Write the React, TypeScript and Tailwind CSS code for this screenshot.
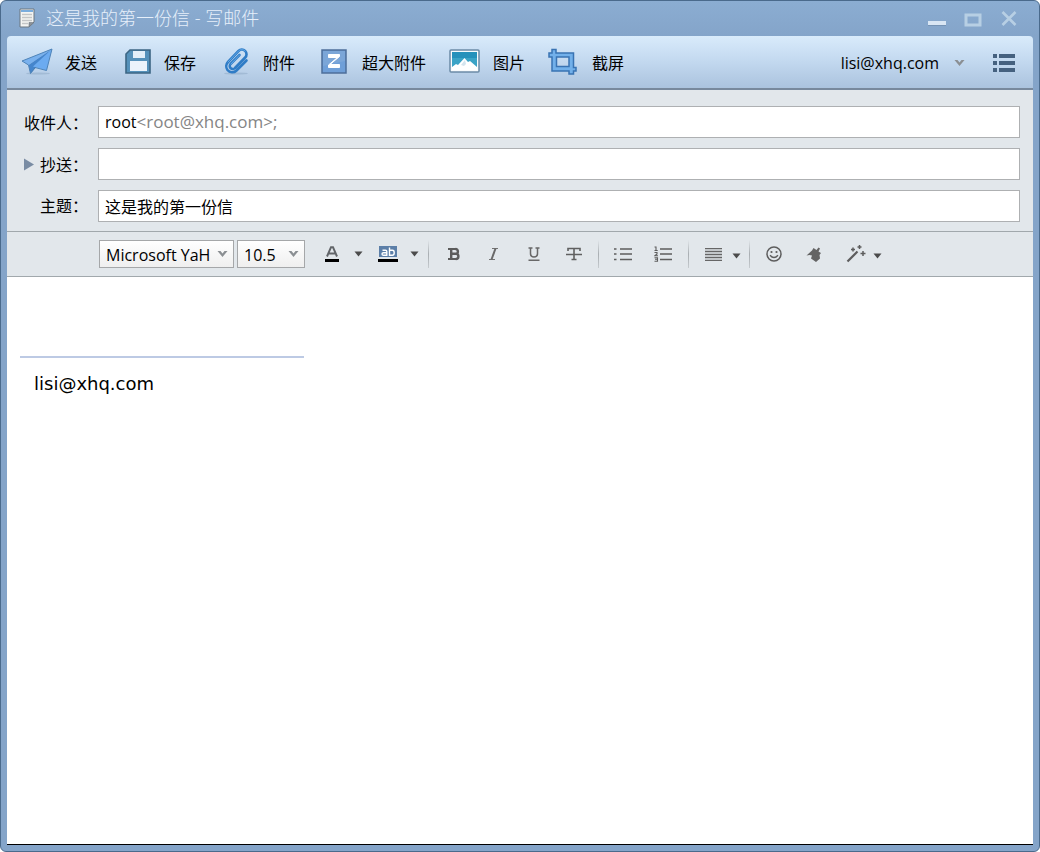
import React, { useState } from "react";

interface IconProps {
  className?: string;
}

const NoteIcon: React.FC<IconProps> = ({ className }) => (
  <svg width="18" height="20" viewBox="0 0 18 20" className={className}>
    <path d="M2 1h14v13l-5 5H2z" fill="#f4f4f2" stroke="#6b7680" strokeWidth="1" />
    <path d="M3 3h12" stroke="#5c9bd8" strokeWidth="1.6" />
    <path d="M4 6.5h10M4 9.5h10M4 12.5h10M4 15.5h6" stroke="#c3c5c6" strokeWidth="1.3" />
    <path d="M11 19v-4.5h5z" fill="#8c9298" stroke="#6b7680" strokeWidth="0.6" />
  </svg>
);

const SendIcon: React.FC = () => (
  <svg width="32" height="28" viewBox="0 2 32 28" className="overflow-visible">
    <ellipse cx="16" cy="26.5" rx="12" ry="1" fill="#93adc9" opacity="0.6" />
    <path d="M30 2 0 14 6.500 18z" fill="#79b1ee" />
    <path d="M30 2 6.500 18l2 8.500z" fill="#4585cc" />
    <path d="M30 2 8.500 26.500l4.500-6z" fill="#2b619f" />
    <path d="M30 2 11 19.500l13.500 4z" fill="#6cabf0" />
    <path
      d="M30 2 0 14 6.500 18l2 8.500 4.500-6 11.500 3z"
      fill="none"
      stroke="#4d83b8"
      strokeWidth="1"
      strokeLinejoin="round"
    />
  </svg>
);

const SaveIcon: React.FC = () => (
  <svg width="32" height="28" viewBox="0 2 32 28" className="overflow-visible">
    <path d="M9 3h20v23H5V7z" fill="#5591ba" stroke="#3c6684" strokeWidth="1.6" />
    <path d="M12 4h12v7H12z" fill="#e3eff9" />
    <path d="M9 14h17v10H9z" fill="#ebf3fb" />
  </svg>
);

const ClipIcon: React.FC = () => (
  <svg width="32" height="28" viewBox="1 2 32 28" className="overflow-visible">
    <ellipse cx="17" cy="26.500" rx="12" ry="1" fill="#93adc9" opacity="0.6" />
    <g fill="none" stroke="#2f7cc6" strokeWidth="2.600" strokeLinecap="round">
      <path d="M27.500 13.500 17.500 23.500a6 6 0 0 1-9-.5 6.200 6.200 0 0 1 .5-8L19.500 4a4.600 4.600 0 0 1 6.700 6.500L16 21a2.800 2.800 0 0 1-4.500-4L20.500 8" />
    </g>
    <g fill="none" stroke="#6fb2ee" strokeWidth="0.8" strokeLinecap="round">
      <path d="M9 15 19.500 4a4.600 4.600 0 0 1 6.700 0M12 17 20.500 8" />
    </g>
  </svg>
);

const BigFileIcon: React.FC = () => (
  <svg width="32" height="28" viewBox="0 2 32 28" className="overflow-visible">
    <path d="M3 3h24v23H3z" fill="#6f9fd8" stroke="#4d6f9a" strokeWidth="1.500" />
    <path d="M4 4h22v10L4 19z" fill="#84abd9" opacity="0.6" />
    <path d="M9.500 7.500h11v2l-9.500 8h9.500v3H9.500v-2.500l9-7.500H9.500z" fill="#fff" stroke="#fff" />
  </svg>
);

const PictureIcon: React.FC = () => (
  <svg width="32" height="28" viewBox="1 2 32 28" className="overflow-visible">
    <rect x="1" y="3" width="29" height="22" rx="1" fill="#f8fbfd" stroke="#6b8ba6" strokeWidth="1.500" />
    <path d="M3 5h25v18H3z" fill="#3ba3c6" />
    <path d="M3 5h25v6H3z" fill="#2691bb" />
    <path d="M3 20l4-3 2 1 6.500-7 3.500 4 2-1 7 6v3H3z" fill="#fff" />
    <path d="m12 18 4-5 1 4-2 2z" fill="#d3e4ee" />
  </svg>
);

const CropIcon: React.FC = () => (
  <svg width="32" height="28" viewBox="1 2 32 28" className="overflow-visible">
    <path
      d="M4 2.500h4V6h17.500v14.500H28V24h-2.500v3H21v-3H4V10H1V6h3zM8.500 10v9.500h12.500V10z"
      fill="#72b0ea"
      fillRule="evenodd"
      stroke="#3973b3"
      strokeWidth="1.500"
    />
  </svg>
);

const Caret: React.FC = () => (
  <svg width="9" height="6" viewBox="0 0 9 6">
    <path d="M0.500 0.500h8L4.500 5.500z" fill="#4b4b4b" />
  </svg>
);

const Chevron: React.FC<IconProps> = ({ className }) => (
  <svg width="11" height="8" viewBox="0 0 11 8" className={className}>
    <path d="M0.500 1h3l2 2.500 2-2.500h3l-5 6z" fill="#8b8f93" />
  </svg>
);

const TextColorIcon: React.FC = () => (
  <svg width="14" height="16" viewBox="0 0 14 16">
    <path d="M2 10.500 6 1.200h2l4 9.300M3.800 7.500h6.400" fill="none" stroke="#626569" strokeWidth="2" />
    <path d="M0 13h14v3H0z" fill="#000" />
  </svg>
);

const HighlightIcon: React.FC = () => (
  <svg width="20" height="16" viewBox="0 0 20 16">
    <path d="M1 0h18v11H1z" fill="#5c7fa8" />
    <g fill="none" stroke="#fff" strokeWidth="1.400">
      <path d="M4.500 4.200h3q1.300 0 1.300 1.300v3.800H5.500q-1.500 0-1.500-1.300t1.500-1.300h3.300" />
      <path d="M11.500 1.500v7.800h3q1.700 0 1.700-2.500t-1.700-2.500h-3" />
    </g>
    <path d="M0 13h20v3H0z" fill="#000" />
  </svg>
);

const BoldIcon: React.FC = () => (
  <svg width="12" height="14" viewBox="0 0 12 14">
    <path d="M0 2h8M0 12h8" stroke="#5c5c5c" strokeWidth="1.800" />
    <path
      d="M3.200 2v10M3.200 6.800h5M7.500 2a2.300 2.300 0 0 1 0 4.800M7.800 6.800a2.600 2.600 0 0 1 0 5.200"
      fill="none"
      stroke="#5c5c5c"
      strokeWidth="2.400"
    />
  </svg>
);

const ItalicIcon: React.FC = () => (
  <svg width="14" height="14" viewBox="0 0 14 14">
    <path d="M5 1.500h6M2 12.500h6" stroke="#737373" strokeWidth="1.200" />
    <path d="m8.500 1.500-4 11" stroke="#686868" strokeWidth="2" />
  </svg>
);

const UnderlineIcon: React.FC = () => (
  <svg width="12" height="14" viewBox="0 0 12 14">
    <path
      d="M0.500 1h4M7.500 1h4M2.500 1v5.500q0 3.500 3.500 3.500t3.500-3.500V1M0.500 13.200h11"
      fill="none"
      stroke="#686868"
      strokeWidth="1.500"
    />
  </svg>
);

const StrikeIcon: React.FC = () => (
  <svg width="18" height="14" viewBox="0 0 18 14">
    <path d="M3 4V1.500h12V4M9 1.500V13M6.500 12.500h5M1 7.500h16" fill="none" stroke="#606060" strokeWidth="1.600" />
  </svg>
);

const BulletListIcon: React.FC = () => (
  <svg width="18" height="14" viewBox="0 0 18 14">
    <path d="M0 2h2.500M0 7h2.500M0 12.500h2.500M6 2h12M6 7h12M6 12.500h12" stroke="#5d5d5d" strokeWidth="1.700" />
  </svg>
);

const NumberListIcon: React.FC = () => (
  <svg width="18" height="16" viewBox="0 0 18 16">
    <path d="M6 3h12M6 8h12M6 13.500h12" stroke="#5d5d5d" strokeWidth="1.700" />
    <path
      d="M0.500 1h1.500v3.500M0.500 4.500h3.200M0.500 6.500h2.500v1.500l-2 1.700h3M0.500 11.700h3v3.500h-3M1 13.300h2"
      fill="none"
      stroke="#5d5d5d"
      strokeWidth="1.100"
    />
  </svg>
);

const AlignIcon: React.FC = () => (
  <svg width="17" height="13" viewBox="0 0 17 13">
    <path d="M0 0.500h17M0 3.500h17M0 6.500h17M0 9.500h17M0 12.500h17" stroke="#666" strokeWidth="1.600" />
  </svg>
);

const SmileIcon: React.FC = () => (
  <svg width="16" height="16" viewBox="0 0 16 16">
    <circle cx="8" cy="8" r="7" fill="none" stroke="#5d5d5d" strokeWidth="1.500" />
    <circle cx="5.500" cy="6" r="1.100" fill="#5d5d5d" />
    <circle cx="10.500" cy="6" r="1.100" fill="#5d5d5d" />
    <path d="M4 9.200q4 4.600 8 0" fill="none" stroke="#5d5d5d" strokeWidth="1.300" />
  </svg>
);

const BucketIcon: React.FC = () => (
  <svg width="16" height="16" viewBox="0 0 16 16">
    <path d="M0.500 9.500 6 4.500l1.500-2.500 3 2 2-2.500 1.500 1-1.500 3 2.500 1.500-1.500 2 .5 3.500-4 3.500-5-3.500 1-3-2.500-.5z" fill="#646464" />
  </svg>
);

const WandIcon: React.FC = () => (
  <svg width="20" height="18" viewBox="0 0 20 18">
    <path d="M1.500 16.500 11.500 6.500" stroke="#5d5d5d" strokeWidth="2.200" />
    <path
      d="M7 2.500v4M5 4.500h4M13.500 0v4M11.500 2h4M17 6v5M14.500 8.500h5"
      stroke="#5d5d5d"
      strokeWidth="1.500"
    />
  </svg>
);

const actions = [
  { label: "发送", icon: <SendIcon /> },
  { label: "保存", icon: <SaveIcon /> },
  { label: "附件", icon: <ClipIcon /> },
  { label: "超大附件", icon: <BigFileIcon /> },
  { label: "图片", icon: <PictureIcon /> },
  { label: "截屏", icon: <CropIcon /> },
];

interface ToolProps {
  label: string;
  className: string;
  children: React.ReactNode;
}

const Tool: React.FC<ToolProps> = ({ label, className, children }) => (
  <button
    type="button"
    aria-label={label}
    title={label}
    className={`flex h-7 shrink-0 items-center justify-center ${className}`}
  >
    {children}
  </button>
);

const Separator: React.FC<IconProps> = ({ className }) => (
  <div className={`h-7 w-px shrink-0 bg-linear-to-b from-[#e2e7eb] via-[#a9aeb2] to-[#c6cbcf] ${className}`} />
);

const fieldClass =
  "h-8 min-w-0 flex-1 border border-[#aeb0b2] bg-white px-1.5 text-base text-black focus:outline-none";

const selectClass =
  "block h-7 w-full appearance-none overflow-hidden border border-[#a5a7a9] bg-linear-to-b from-white to-[#efefef] pt-0.5 pr-[23px] pl-1.5";

const App: React.FC = () => {
  const [recipient, setRecipient] = useState("");
  const [cc, setCc] = useState("");
  const [subject, setSubject] = useState("这是我的第一份信");
  const [font, setFont] = useState("Microsoft YaHei");
  const [size, setSize] = useState("10.5");

  return (
    <div className="flex min-h-screen flex-col rounded-md border border-[#4a6a8c] bg-linear-to-b from-[#8badd2] to-[#84a4c9] to-[36px] px-1.5 pb-1.5 font-['Open_Sans','Noto_Sans_CJK_SC',sans-serif] text-base text-black">
      <header className="flex h-[35px] items-center pr-3 pb-0.5 pl-[11px]">
        <NoteIcon />
        <h1 className="ml-2.5 flex-1 text-lg leading-6 font-light text-[#e6effa]">这是我的第一份信 - 写邮件</h1>
        <div className="flex items-center gap-3">
          <button type="button" aria-label="最小化" className="flex h-6 w-6 items-center justify-center">
            <svg width="18" height="18" viewBox="0 0 18 18">
              <path d="M0 12h18v4H0z" fill="#d9e6f4" />
              <path d="M0 16h18v1H0z" fill="#7593b5" />
            </svg>
          </button>
          <button type="button" aria-label="最大化" className="flex h-6 w-6 items-center justify-center">
            <svg width="18" height="18" viewBox="0 0 18 18">
              <path d="M2 6h14v10H2z" fill="none" stroke="#b7cfe4" strokeWidth="3" />
            </svg>
          </button>
          <button type="button" aria-label="关闭" className="flex h-6 w-6 items-center justify-center">
            <svg width="16" height="16" viewBox="0 0 16 16">
              <path d="m1.500 2 13 13M14.500 2l-13 13" stroke="#b7cfe4" strokeWidth="2.600" />
            </svg>
          </button>
        </div>
      </header>

      <div className="flex h-[54px] items-center justify-between rounded-t-sm border-b-2 border-[#78899d] bg-linear-to-b from-[#d9ebfb] via-[#c2d8ef] to-[#abc3de] pt-0.5 pr-[18px] pl-[15px]">
        <nav className="flex items-center gap-6">
          {actions.map(({ label, icon }) => (
            <button key={label} type="button" className="flex items-center gap-[11px] leading-6">
              {icon}
              {label}
            </button>
          ))}
        </nav>
        <div className="flex items-center">
          <button type="button" className="flex items-center gap-[15px] leading-6">
            lisi@xhq.com
            <Chevron />
          </button>
          <button type="button" aria-label="菜单" className="ml-7">
            <svg width="22" height="18" viewBox="0 0 22 18">
              <path d="M0 2h4M0 9h4M0 16h4M6 2h16M6 9h16M6 16h16" stroke="#45617f" strokeWidth="4" />
            </svg>
          </button>
        </div>
      </div>

      <div className="flex flex-col gap-2.5 border-b border-[#a1a8ac] bg-[#e2e7eb] pt-4 pr-[13px] pb-[9px] pl-[17px]">
        <div className="flex items-center gap-2.5">
          <label htmlFor="recipient" className="w-16 shrink-0 pt-0.5 text-right leading-6">
            收件人：
          </label>
          <div className="flex h-8 min-w-0 flex-1 items-center border border-[#aeb0b2] bg-white px-1.5">
            <span>root</span>
            <span className="text-[17px] text-[#858585]">&lt;root@xhq.com&gt;;</span>
            <input
              id="recipient"
              type="text"
              value={recipient}
              onChange={(e) => setRecipient(e.target.value)}
              className="min-w-0 flex-1 focus:outline-none"
            />
          </div>
        </div>
        <div className="flex items-center gap-2.5">
          <div className="flex w-16 shrink-0 items-center justify-between">
            <button type="button" aria-label="展开抄送">
              <svg width="10" height="13" viewBox="0 0 10 13">
                <path d="M0 0.500 10 6.500 0 12.500z" fill="#798ca3" />
              </svg>
            </button>
            <label htmlFor="cc" className="pt-0.5 leading-6">
              抄送：
            </label>
          </div>
          <input id="cc" type="text" value={cc} onChange={(e) => setCc(e.target.value)} className={fieldClass} />
        </div>
        <div className="flex items-center gap-2.5">
          <label htmlFor="subject" className="w-16 shrink-0 text-right leading-6">
            主题：
          </label>
          <input
            id="subject"
            type="text"
            value={subject}
            onChange={(e) => setSubject(e.target.value)}
            className={fieldClass}
          />
        </div>
      </div>

      <div className="flex h-[45px] items-center border-b border-[#a1a8ac] bg-[#e2e7eb] pl-[92px]">
        <div className="relative w-[135px] shrink-0">
          <select
            aria-label="字体"
            value={font}
            onChange={(e) => setFont(e.target.value)}
            className={selectClass}
          >
            <option>Microsoft YaHei</option>
            <option>SimSun</option>
          </select>
          <Chevron className="pointer-events-none absolute top-2.5 right-1.5" />
        </div>
        <div className="relative ml-[3px] w-[68px] shrink-0">
          <select
            aria-label="字号"
            value={size}
            onChange={(e) => setSize(e.target.value)}
            className={selectClass}
          >
            <option>10.5</option>
            <option>12</option>
          </select>
          <Chevron className="pointer-events-none absolute top-2.5 right-1.5" />
        </div>
        <Tool label="字体颜色" className="ml-[13px] w-7">
          <TextColorIcon />
        </Tool>
        <Tool label="选择字体颜色" className="w-6">
          <Caret />
        </Tool>
        <Tool label="背景颜色" className="w-9">
          <HighlightIcon />
        </Tool>
        <Tool label="选择背景颜色" className="w-4">
          <Caret />
        </Tool>
        <Separator className="mr-[5px] ml-1.5" />
        <Tool label="加粗" className="w-10">
          <BoldIcon />
        </Tool>
        <Tool label="斜体" className="w-10">
          <ItalicIcon />
        </Tool>
        <Tool label="下划线" className="w-10">
          <UnderlineIcon />
        </Tool>
        <Tool label="删除线" className="w-10">
          <StrikeIcon />
        </Tool>
        <Separator className="mx-1" />
        <Tool label="项目符号" className="w-10">
          <BulletListIcon />
        </Tool>
        <Tool label="编号" className="w-10">
          <NumberListIcon />
        </Tool>
        <Separator className="mr-[7px] ml-[5px]" />
        <Tool label="对齐" className="w-[34px]">
          <AlignIcon />
        </Tool>
        <Tool label="选择对齐方式" className="w-3 pt-1">
          <Caret />
        </Tool>
        <Separator className="mr-1 ml-[7px]" />
        <Tool label="表情" className="w-10">
          <SmileIcon />
        </Tool>
        <Tool label="信纸" className="w-10">
          <BucketIcon />
        </Tool>
        <Tool label="特效" className="ml-[7px] w-[30px]">
          <WandIcon />
        </Tool>
        <Tool label="选择特效" className="w-3 pt-1">
          <Caret />
        </Tool>
      </div>

      <div
        role="textbox"
        aria-label="正文"
        contentEditable
        suppressContentEditableWarning
        className="flex-1 border-b border-black bg-white px-[13px] pt-[79px] focus:outline-none"
      >
        <hr className="h-0.5 w-[284px] border-0 bg-[#bdcae4]" />
        <p className="mt-3.5 pl-3.5 font-['DejaVu_Sans',sans-serif] text-lg leading-6">lisi@xhq.com</p>
      </div>
    </div>
  );
};

export default App;
